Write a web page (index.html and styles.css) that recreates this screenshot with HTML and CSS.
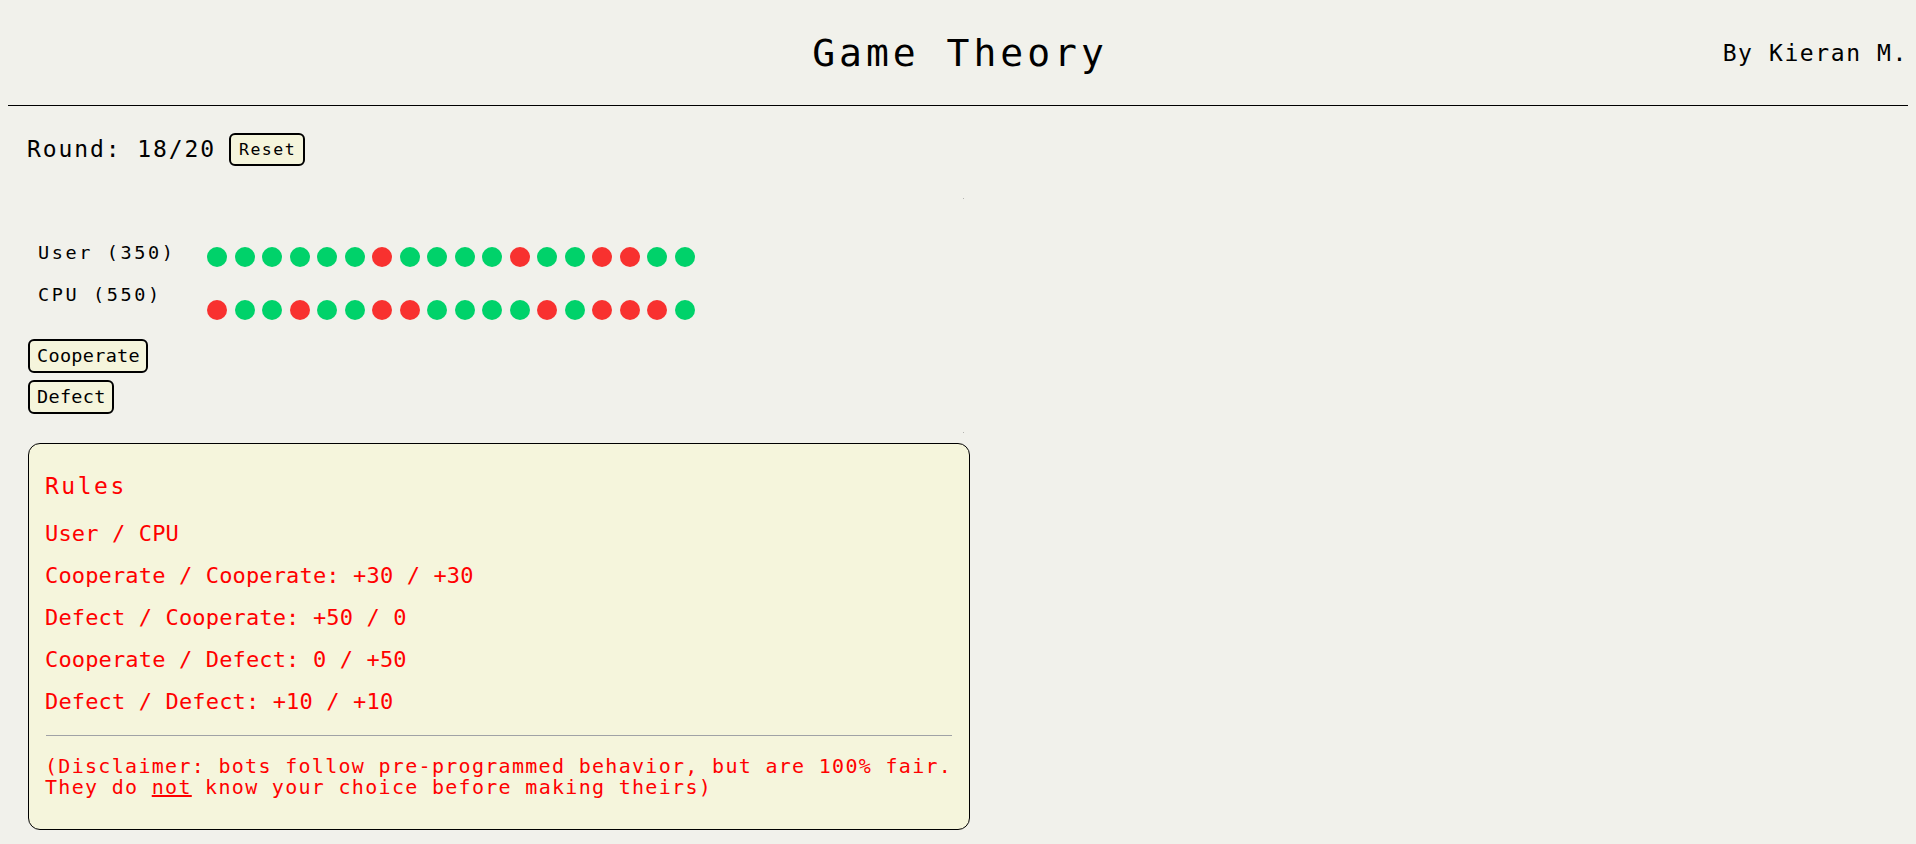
FILE: index.html
```html
<!DOCTYPE html>
<html lang="en">
<head>
<meta charset="utf-8">
<title>Game Theory</title>
<link rel="stylesheet" href="styles.css">
</head>
<body>
<header class="topbar">
  <div class="spacer"></div>
  <h1 class="title">Game Theory</h1>
  <div class="author">By Kieran M.</div>
</header>
<main class="main">
  <div class="round-row">
    <span class="round-text">Round: 18/20</span>
    <button class="btn btn-reset">Reset</button>
  </div>
  <div class="sep"><span class="sep-dot"></span></div>
  <div class="scores">
    <div class="score-row row-user">
      <div class="score-label">User (350)</div>
      <div class="dots">
        <span class="dot g"></span><span class="dot g"></span><span class="dot g"></span><span class="dot g"></span><span class="dot g"></span><span class="dot g"></span><span class="dot r"></span><span class="dot g"></span><span class="dot g"></span><span class="dot g"></span><span class="dot g"></span><span class="dot r"></span><span class="dot g"></span><span class="dot g"></span><span class="dot r"></span><span class="dot r"></span><span class="dot g"></span><span class="dot g"></span>
      </div>
    </div>
    <div class="score-row row-cpu">
      <div class="score-label">CPU (550)</div>
      <div class="dots">
        <span class="dot r"></span><span class="dot g"></span><span class="dot g"></span><span class="dot r"></span><span class="dot g"></span><span class="dot g"></span><span class="dot r"></span><span class="dot r"></span><span class="dot g"></span><span class="dot g"></span><span class="dot g"></span><span class="dot g"></span><span class="dot r"></span><span class="dot g"></span><span class="dot r"></span><span class="dot r"></span><span class="dot r"></span><span class="dot g"></span>
      </div>
    </div>
  </div>
  <div class="actions">
    <button class="btn btn-action">Cooperate</button>
    <button class="btn btn-action">Defect</button>
  </div>
  <div class="sep sep-2"><span class="sep-dot"></span></div>
  <section class="rules">
    <h3 class="rules-title">Rules</h3>
    <p class="rule">User / CPU</p>
    <p class="rule">Cooperate / Cooperate: +30 / +30</p>
    <p class="rule">Defect / Cooperate: +50 / 0</p>
    <p class="rule">Cooperate / Defect: 0 / +50</p>
    <p class="rule">Defect / Defect: +10 / +10</p>
    <hr class="rules-hr">
    <p class="disclaimer">(Disclaimer: bots follow pre-programmed behavior, but are 100% fair.<br>They do <u>not</u> know your choice before making theirs)</p>
  </section>
</main>
</body>
</html>
```

FILE: styles.css
```css
html, body {
  background: #f1f1eb;
}
body {
  margin: 8px;
  font-family: "DejaVu Sans Mono", "Liberation Mono", monospace;
  color: #000;
}

.topbar {
  display: grid;
  grid-template-columns: 1fr auto 1fr;
  align-items: center;
  padding: 23px 0 30px;
  border-bottom: 1px solid #000;
}
.title {
  margin: 0;
  font-size: 38px;
  line-height: 44px;
  letter-spacing: 4px;
  font-weight: normal;
  margin-right: -4px;
}
.author {
  justify-self: end;
  font-size: 23px;
  line-height: 27px;
  letter-spacing: 1.6px;
}

.main {
  padding: 0 20px;
}

.round-row {
  display: flex;
  align-items: center;
  gap: 13px;
  margin-top: 27px;
  margin-left: -1px;
}
.round-text {
  font-size: 23px;
  line-height: 27px;
  letter-spacing: 1.9px;
}

.btn {
  font-family: "DejaVu Sans Mono", "Liberation Mono", monospace;
  color: #000;
  background: #f5f5dc;
  border: 2px solid #000;
  border-radius: 6px;
  margin: 0;
  cursor: pointer;
}
.btn-reset {
  font-size: 16.5px;
  line-height: 19px;
  letter-spacing: 1.5px;
  padding: 5px 7px 5px 8px;
}
.btn-action {
  font-size: 18.5px;
  line-height: 22px;
  letter-spacing: 0.3px;
  padding: 4px 6px 4px 7px;
}

.sep {
  display: flex;
  justify-content: flex-end;
  width: 936px;
  height: 1px;
  margin-top: 32px;
}
.sep-dot {
  width: 1px;
  height: 1px;
  background: #b4b4b0;
}
.sep-2 {
  margin-top: 18px;
}

.scores {
  margin-top: 43px;
  padding-left: 10px;
}
.score-row {
  display: flex;
  align-items: flex-start;
}
.row-user {
  height: 42px;
}
.row-cpu {
  height: 36px;
}
.score-label {
  width: 169px;
  font-size: 18.5px;
  line-height: 22px;
  letter-spacing: 2.6px;
}
.dots {
  display: flex;
  gap: 7.5px;
}
.row-user .dots {
  margin-top: 5px;
}
.row-cpu .dots {
  margin-top: 16px;
}
.dot {
  width: 20px;
  height: 20px;
  border-radius: 50%;
}
.dot.g {
  background: #00d26a;
}
.dot.r {
  background: #f8312f;
}

.actions {
  display: flex;
  flex-direction: column;
  align-items: flex-start;
  gap: 7px;
  margin-top: 19px;
}

.rules {
  width: 908px;
  margin-top: 10px;
  padding: 16px 16px 30px;
  background: #f5f5dc;
  border: 1px solid #000;
  border-radius: 12px;
  color: #ff0000;
}
.rules-title {
  margin: 13px 0 21px;
  font-size: 23px;
  line-height: 27px;
  letter-spacing: 2.5px;
  font-weight: normal;
}
.rule {
  margin: 0 0 16px;
  font-size: 22px;
  line-height: 26px;
  letter-spacing: 0.15px;
}
.rule:nth-of-type(5) {
  margin-bottom: 0;
}
.rules-hr {
  margin: 20px 1px 0 1px;
  border: 0;
  border-top: 1px solid #a0a2a6;
  height: 0;
}
.disclaimer {
  margin: 20px 0 0;
  font-size: 20px;
  line-height: 21.3px;
  letter-spacing: 1.3px;
  white-space: nowrap;
}
```
